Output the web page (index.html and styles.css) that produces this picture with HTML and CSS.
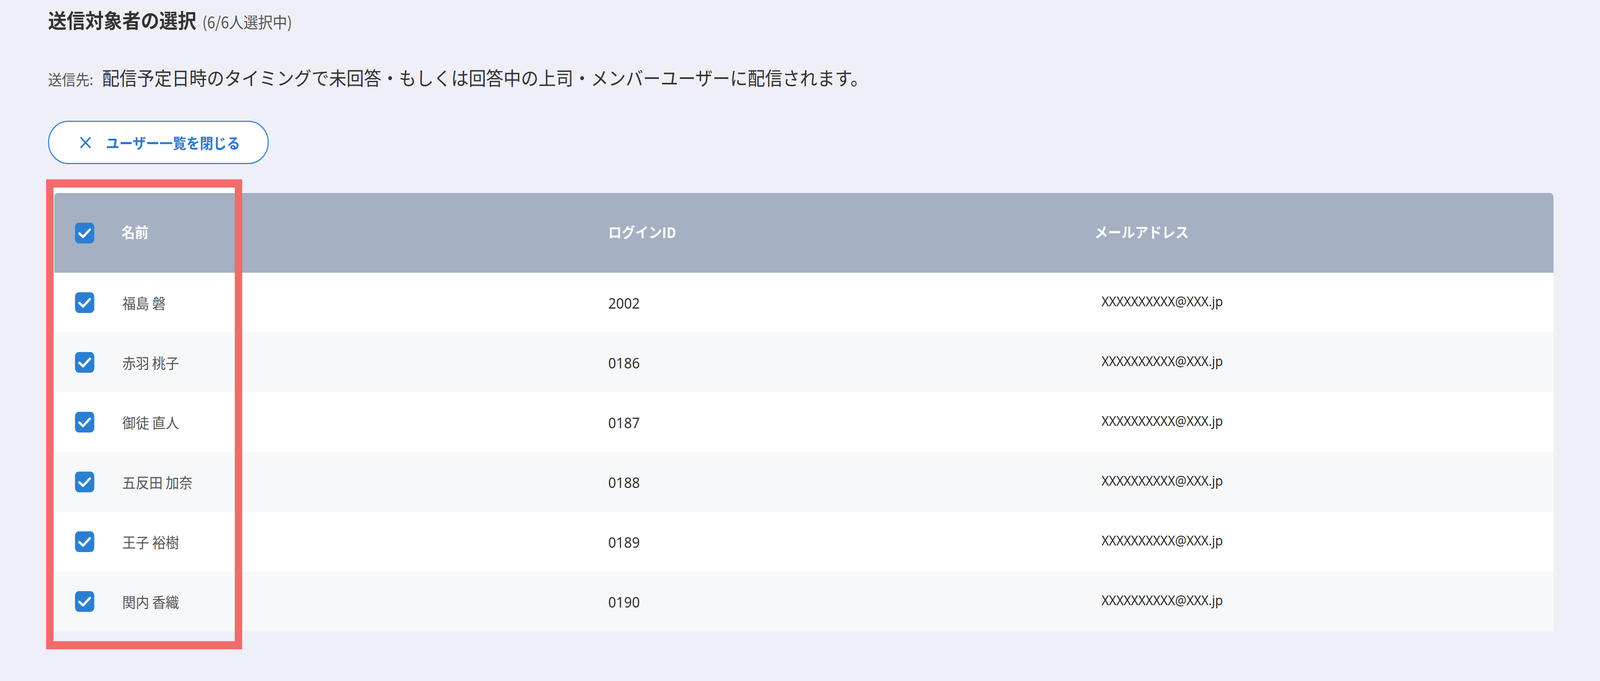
FILE: index.html
```html
<!DOCTYPE html>
<html lang="ja">
<head>
<meta charset="utf-8">
<title>送信対象者の選択</title>
<link rel="stylesheet" href="styles.css">
</head>
<body>
<main class="page">
  <h2 class="title">送信対象者の選択<span class="count">(6/6人選択中)</span></h2>
  <p class="dest"><span class="dest-label">送信先:</span>配信予定日時のタイミングで未回答・もしくは回答中の上司・メンバーユーザーに配信されます。</p>
  <button class="close-btn" type="button">
    <svg class="x-icon" viewBox="0 0 24 24" aria-hidden="true"><path d="M3 3 L21 21 M21 3 L3 21"/></svg>
    <span>ユーザー一覧を閉じる</span>
  </button>

  <div class="table-wrap">
    <div class="table">
      <div class="row head">
        <div class="cell check"><div class="cb"><svg viewBox="0 0 24 24"><path d="M5.5 12.5 L10 16.5 L18.5 8"/></svg></div></div>
        <div class="cell"><span>名前</span></div>
        <div class="cell"><span>ログインID</span></div>
        <div class="cell"><span>メールアドレス</span></div>
      </div>
      <div class="row">
        <div class="cell check"><div class="cb"><svg viewBox="0 0 24 24"><path d="M5.5 12.5 L10 16.5 L18.5 8"/></svg></div></div>
        <div class="cell name"><span>福島 磐</span></div>
        <div class="cell id"><span>2002</span></div>
        <div class="cell mail"><span>XXXXXXXXXX@XXX.jp</span></div>
      </div>
      <div class="row">
        <div class="cell check"><div class="cb"><svg viewBox="0 0 24 24"><path d="M5.5 12.5 L10 16.5 L18.5 8"/></svg></div></div>
        <div class="cell name"><span>赤羽 桃子</span></div>
        <div class="cell id"><span>0186</span></div>
        <div class="cell mail"><span>XXXXXXXXXX@XXX.jp</span></div>
      </div>
      <div class="row">
        <div class="cell check"><div class="cb"><svg viewBox="0 0 24 24"><path d="M5.5 12.5 L10 16.5 L18.5 8"/></svg></div></div>
        <div class="cell name"><span>御徒 直人</span></div>
        <div class="cell id"><span>0187</span></div>
        <div class="cell mail"><span>XXXXXXXXXX@XXX.jp</span></div>
      </div>
      <div class="row">
        <div class="cell check"><div class="cb"><svg viewBox="0 0 24 24"><path d="M5.5 12.5 L10 16.5 L18.5 8"/></svg></div></div>
        <div class="cell name"><span>五反田 加奈</span></div>
        <div class="cell id"><span>0188</span></div>
        <div class="cell mail"><span>XXXXXXXXXX@XXX.jp</span></div>
      </div>
      <div class="row">
        <div class="cell check"><div class="cb"><svg viewBox="0 0 24 24"><path d="M5.5 12.5 L10 16.5 L18.5 8"/></svg></div></div>
        <div class="cell name"><span>王子 裕樹</span></div>
        <div class="cell id"><span>0189</span></div>
        <div class="cell mail"><span>XXXXXXXXXX@XXX.jp</span></div>
      </div>
      <div class="row">
        <div class="cell check"><div class="cb"><svg viewBox="0 0 24 24"><path d="M5.5 12.5 L10 16.5 L18.5 8"/></svg></div></div>
        <div class="cell name"><span>関内 香織</span></div>
        <div class="cell id"><span>0190</span></div>
        <div class="cell mail"><span>XXXXXXXXXX@XXX.jp</span></div>
      </div>
    </div>
    <div class="highlight"></div>
  </div>
</main>
</body>
</html>
```

FILE: styles.css
```css
/* Design is drawn for a 4400px wide canvas; --sx fits horizontal sizes to the viewport width */
:root {
  --sx: tan(atan2(100vw, 4400px));
}
html, body {
  margin: 0;
  padding: 0;
  overflow: hidden;
}
body {
  background: #efeff8;
  font-family: "Noto Sans CJK JP", "Noto Sans", sans-serif;
  color: #333;
}
.page {
  padding: 20px calc(128px * var(--sx)) 60px calc(132px * var(--sx));
  display: flex;
  flex-direction: column;
  align-items: flex-start;
}
.title,
.dest,
.close-btn,
.cell > span,
.cb {
  transform: scaleX(var(--sx));
  transform-origin: 0 50%;
}
.title {
  margin: 0;
  font-size: 51px;
  line-height: 60px;
  font-weight: 700;
  color: #333;
  white-space: nowrap;
}
.count {
  font-size: 40px;
  font-weight: 400;
  color: #555;
  margin-left: 16px;
}
.dest {
  margin: 82px 0 0;
  font-size: 48px;
  line-height: 60px;
  color: #333;
  white-space: nowrap;
}
.dest-label {
  font-size: 38px;
  color: #555;
  margin-right: 24px;
}
.close-btn {
  margin-top: 77px;
  height: 111px;
  box-sizing: border-box;
  border: 3px solid #3a86d4;
  border-radius: 56px;
  background: #fff;
  padding: 0 76px 0 82px;
  display: flex;
  align-items: center;
  gap: 38px;
  font-family: "Noto Sans CJK JP", sans-serif;
  font-size: 37px;
  font-weight: 700;
  color: #2a78d0;
  cursor: pointer;
}
.x-icon {
  width: 36px;
  height: 36px;
  flex: none;
}
.x-icon path {
  fill: none;
  stroke: #2a78d0;
  stroke-width: 2.6;
}
.table-wrap {
  position: relative;
  align-self: stretch;
  margin-top: 74px;
  margin-left: calc(17px * var(--sx));
}
.row {
  display: grid;
  grid-template-columns: calc(185px * var(--sx)) calc(1339px * var(--sx)) calc(1337px * var(--sx)) 1fr;
  height: 153px;
  background: #fff;
}
.row:nth-child(odd) {
  background: #f7f8fa;
}
.row.head {
  height: 204px;
  background: #a5b0c2;
  border-radius: calc(10px * var(--sx)) calc(10px * var(--sx)) 0 0 / 10px 10px 0 0;
  color: #fff;
  font-size: 37px;
  font-weight: 700;
}
.cell {
  display: flex;
  align-items: center;
  white-space: nowrap;
  box-sizing: border-box;
}
.row.head .cell {
  padding-bottom: 6px;
}
.cell > span {
  display: inline-block;
}
.cell.check {
  padding-left: calc(57px * var(--sx));
}
.cb {
  width: 53px;
  height: 53px;
  flex: none;
  border-radius: 11px;
  background: #2a7fd4;
}
.row.head .cb {
  margin-top: 6px;
}
.cb svg {
  display: block;
  width: 53px;
  height: 53px;
}
.cb path {
  fill: none;
  stroke: #fff;
  stroke-width: 2.8;
  stroke-linecap: round;
  stroke-linejoin: round;
}
.name {
  font-size: 37px;
  color: #555;
  padding-left: calc(2px * var(--sx));
}
.id {
  font-family: "Noto Sans", sans-serif;
  font-size: 38px;
  color: #333;
}
.mail {
  font-family: "Open Sans", sans-serif;
  font-size: 35px;
  color: #222;
  padding-left: calc(19px * var(--sx));
  padding-bottom: 8px;
}
.highlight {
  position: absolute;
  left: calc(-22px * var(--sx));
  top: -35px;
  width: calc(539px * var(--sx));
  height: 1203px;
  box-sizing: border-box;
  border-style: solid;
  border-color: #f26b6b;
  border-width: 21px calc(21px * var(--sx));
  background: linear-gradient(#fff 0, #fff 14px, transparent 14px);
  pointer-events: none;
}
```
